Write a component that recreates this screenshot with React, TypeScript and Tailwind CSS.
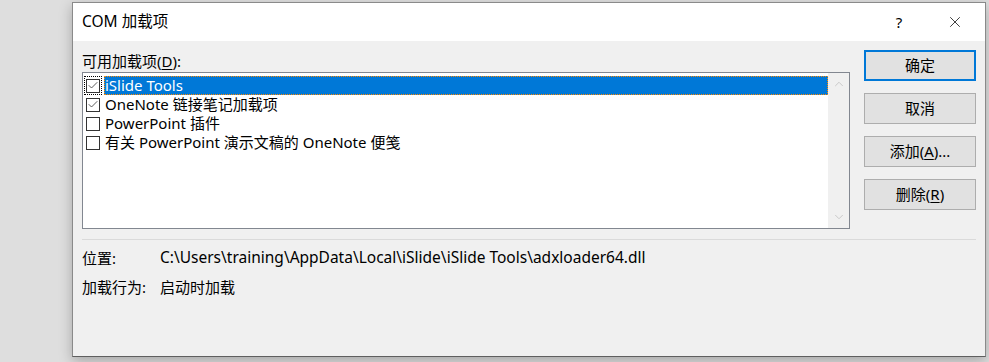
import { Check, ChevronUp, ChevronDown, X } from "lucide-react";

const font = { fontFamily: '"Noto Sans", "Noto Sans CJK SC", sans-serif' };

function CheckBox({ checked, focused }: { checked: boolean; focused?: boolean }) {
  return (
    <div className={`flex h-[19px] w-[18px] shrink-0 items-center justify-center ${focused ? "outline-1 outline-dotted outline-black -outline-offset-1" : ""}`}>
      <div className="flex h-[14px] w-[14px] items-center justify-center border border-[#333] bg-white">
        {checked && <Check size={13} strokeWidth={1.6} className="text-[#333]" />}
      </div>
    </div>
  );
}

const items = [
  { label: "iSlide Tools", checked: true },
  { label: "OneNote 链接笔记加载项", checked: true },
  { label: "PowerPoint 插件", checked: false },
  { label: "有关 PowerPoint 演示文稿的 OneNote 便笺", checked: false },
];

function DlgButton({ children, primary }: { children: React.ReactNode; primary?: boolean }) {
  return (
    <button
      className={`flex h-[31px] w-[112px] items-center justify-center bg-[#e1e1e1] text-[15px] text-black ${
        primary ? "border-2 border-[#0078d7]" : "border border-[#adadad]"
      }`}
    >
      {children}
    </button>
  );
}

export default function App() {
  return (
    <div className="h-[362px] w-[989px] overflow-hidden bg-[#dedede] pl-[72px] pt-[2px]" style={font}>
      <div className="flex h-[355px] w-[914px] flex-col border border-[#8a8a8a] border-b-[#5f5f5f] bg-[#f0f0f0] shadow-[0_4px_12px_rgba(0,0,0,0.25)]">
        {/* title bar */}
        <div className="flex h-[38px] items-center bg-white pl-[9px] text-[15.5px] text-black">
          <span className="flex-1">COM 加载项</span>
          <span className="w-[56px] text-center text-[15px]">?</span>
          <div className="flex w-[58px] justify-center pr-[2px]">
            <X size={18} strokeWidth={1} />
          </div>
        </div>

        <div className="flex flex-1 flex-col px-[9px] text-[15px]">
          <div className="flex">
            <div className="flex flex-1 flex-col">
              <div className="mt-[10px] h-[20px] leading-[20px]">
                可用加载项(<span className="underline underline-offset-2">D</span>):
              </div>
              <div className="mt-[1px] flex h-[157px] w-[768px] border border-[#828790] bg-white">
                <div className="flex flex-1 flex-col pt-[3px] pl-[1px]">
                  {items.map((it, i) => (
                    <div key={i} className="flex h-[19px] items-center">
                      <CheckBox checked={it.checked} focused={i === 0} />
                      <div
                        className={`ml-[2px] flex h-[19px] flex-1 items-center pl-[1px] ${
                          i === 0 ? "bg-[#0078d7] text-white outline-1 outline-dotted outline-[#ff8a00] -outline-offset-1" : "text-black"
                        }`}
                      >
                        {it.label}
                      </div>
                    </div>
                  ))}
                </div>
                <div className="flex w-[21px] flex-col items-center justify-between bg-[#f0f0f0] py-[4px] text-[#c4c4c4]">
                  <ChevronUp size={14} strokeWidth={1.5} />
                  <ChevronDown size={14} strokeWidth={1.5} />
                </div>
              </div>
            </div>
            <div className="mt-[9px] flex flex-col gap-[12px] pl-[14px] pr-[1px]">
              <DlgButton primary>确定</DlgButton>
              <DlgButton>取消</DlgButton>
              <DlgButton>
                添加(<span className="underline underline-offset-2">A</span>)...
              </DlgButton>
              <DlgButton>
                删除(<span className="underline underline-offset-2">R</span>)
              </DlgButton>
            </div>
          </div>

          <div className="mt-[10px] h-px w-[894px] bg-[#dadada]" />

          <div className="mt-[7px] flex h-[22px] items-center">
            <span className="w-[78px]">位置:</span>
            <span className="text-[15.5px]">C:\Users\training\AppData\Local\iSlide\iSlide Tools\adxloader64.dll</span>
          </div>
          <div className="mt-[7px] flex h-[22px] items-center">
            <span className="w-[78px]">加载行为:</span>
            <span>启动时加载</span>
          </div>
        </div>
      </div>
    </div>
  );
}
